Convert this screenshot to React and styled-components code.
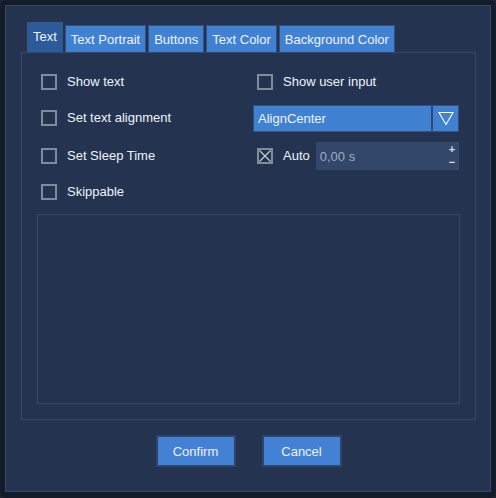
import React, { useState } from 'react';
import styled, { createGlobalStyle } from 'styled-components';

const tabs = ['Text', 'Text Portrait', 'Buttons', 'Text Color', 'Background Color'];

const GlobalStyle = createGlobalStyle`
	html, body {
		margin:0;
		padding:0;
		background:#1b2433;
	}
	* {
		box-sizing:border-box;
	}
`;

const CheckBox = ({ checked, label, onToggle }) => (
	<CheckRow onClick={onToggle}>
		<Box>
			{checked && (
				<svg width='12' height='12' viewBox='0 0 12 12'>
					<path d='M0.5 0.5 L11.5 11.5 M11.5 0.5 L0.5 11.5' stroke='#c9ced6' strokeWidth='1.2' />
				</svg>
			)}
		</Box>
		{label && <Label>{label}</Label>}
	</CheckRow>
);

const App = () => {
	const [active, setActive] = useState(0);
	const [checks, setChecks] = useState({
		showText: false,
		userInput: false,
		alignment: false,
		sleep: false,
		auto: true,
		skip: false,
	});

	const toggle = (key) => setChecks((prev) => ({ ...prev, [key]: !prev[key] }));

	return (
		<>
			<GlobalStyle />
			<Frame>
				<Panel>
					<TabRow>
						{
							tabs.map((tab, i) => (
								<Tab key={tab} $active={active === i} onClick={() => setActive(i)}>
									{tab}
								</Tab>
							))
						}
					</TabRow>

					<TabBody>
						<Grid>
							<CheckBox label='Show text' checked={checks.showText} onToggle={() => toggle('showText')} />
							<CheckBox label='Show user input' checked={checks.userInput} onToggle={() => toggle('userInput')} />

							<CheckBox label='Set text alignment' checked={checks.alignment} onToggle={() => toggle('alignment')} />
							<Select>
								<SelectValue>AlignCenter</SelectValue>
								<SelectArrow>
									<svg width='16' height='15' viewBox='0 0 16 15'>
										<path d='M1 1.5 H15 L8 13.5 Z' fill='none' stroke='#ffffff' strokeWidth='1.1' />
									</svg>
								</SelectArrow>
							</Select>

							<CheckBox label='Set Sleep Time' checked={checks.sleep} onToggle={() => toggle('sleep')} />
							<AutoCell>
								<CheckBox label='Auto' checked={checks.auto} onToggle={() => toggle('auto')} />
								<Spin>
									<SpinValue>0,00 s</SpinValue>
									<SpinButtons>
										<span>+</span>
										<span>−</span>
									</SpinButtons>
								</Spin>
							</AutoCell>

							<CheckBox label='Skippable' checked={checks.skip} onToggle={() => toggle('skip')} />
							<div />
						</Grid>

						<TextArea />
					</TabBody>

					<Footer>
						<Button>Confirm</Button>
						<Button>Cancel</Button>
					</Footer>
				</Panel>
			</Frame>
		</>
	);
};

const Frame = styled.div`
width:496px;
height:498px;
padding:5px 5px 6px 5px;
background:#141c2a;
border-radius:7px;
font-family:"Liberation Sans", Arial, sans-serif;
font-size:13px;
color:#eef3fa;
`;

const Panel = styled.div`
height:100%;
background:#243350;
border:1px solid #33476a;
padding:16px 14px 0 15px;
display:flex;
flex-direction:column;
`;

const TabRow = styled.div`
display:flex;
align-items:flex-end;
gap:2px;
margin-left:6px;
height:30px;
`;

const Tab = styled.div`
height:${({ $active }) => ($active ? '30px' : '27px')};
padding:${({ $active }) => ($active ? '0 5px 3px' : '1px 5px 0')};
display:flex;
align-items:center;
background:${({ $active }) => ($active ? '#2c5b9b' : '#4181d2')};
border:1px solid ${({ $active }) => ($active ? '#3a5784' : '#34507c')};
border-bottom:none;
cursor:pointer;
white-space:nowrap;
`;

const TabBody = styled.div`
height:368px;
border:1px solid #34486a;
padding:11px 15px 0 15px;
display:flex;
flex-direction:column;
`;

const Grid = styled.div`
display:grid;
grid-template-columns:216px 206px;
grid-template-rows:36px 36px 40px 32px;
align-items:center;
`;

const CheckRow = styled.label`
display:flex;
align-items:center;
gap:10px;
padding-left:4px;
cursor:pointer;
user-select:none;
`;

const Box = styled.span`
width:16px;
height:16px;
border:2px solid #828b9a;
display:flex;
align-items:center;
justify-content:center;
flex:none;
`;

const Label = styled.span`
line-height:16px;
white-space:nowrap;
`;

const Select = styled.div`
height:27px;
display:flex;
background:#4181d2;
border:1px solid #34507c;
`;

const SelectValue = styled.div`
flex:1;
display:flex;
align-items:center;
padding-left:4px;
`;

const SelectArrow = styled.div`
width:27px;
display:flex;
align-items:center;
justify-content:center;
border-left:2px solid #2e4a72;
padding-top:1px;
`;

const AutoCell = styled.div`
display:flex;
align-items:center;
gap:6px;
`;

const Spin = styled.div`
flex:1;
height:28px;
background:#33476a;
display:flex;
align-items:center;
padding-left:4px;
`;

const SpinValue = styled.span`
flex:1;
color:#9fabbd;
`;

const SpinButtons = styled.div`
width:14px;
display:flex;
flex-direction:column;
align-items:center;
justify-content:center;
color:#d4d9e1;
font-weight:bold;
font-size:11px;
line-height:13px;
`;

const TextArea = styled.div`
margin-top:6px;
height:190px;
border:1px solid #34486a;
`;

const Footer = styled.div`
display:flex;
justify-content:center;
gap:26px;
margin-top:15px;
`;

const Button = styled.button`
width:80px;
height:32px;
background:#4281d3;
border:2px solid #2f4468;
color:#eef3fa;
font-family:"Liberation Sans", Arial, sans-serif;
font-size:13px;
cursor:pointer;
`;

export default App;
